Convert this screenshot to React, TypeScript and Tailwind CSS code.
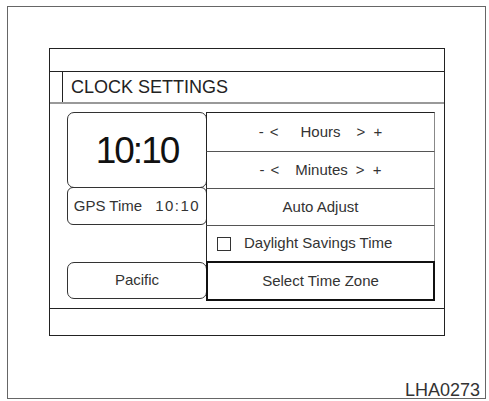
import React from 'react';

const font = { fontFamily: '"Liberation Sans", Arial, sans-serif' };

function Row({ children, className = '' }: { children: React.ReactNode; className?: string }) {
    return (
        <div className={`-mt-px flex items-center justify-center border border-[#555] border-r-[#888] text-[15px] text-[#333] ${className}`}>
            {children}
        </div>
    );
}

function Stepper({ label, gap }: { label: string; gap: string }) {
    return (
        <div className="flex items-center">
            <span className="w-[11px]">-</span>
            <span>&lt;</span>
            <span className={gap}>{label}</span>
            <span className="w-[17px]">&gt;</span>
            <span>+</span>
        </div>
    );
}

export default function App() {
    return (
        <div className="w-[489px] h-[401px] bg-white pt-[6px] pl-[7px]" style={font}>
            <div className="w-[479px] h-[393px] border border-[#666] flex flex-col">
                {/* nav screen */}
                <div className="mt-[41px] ml-[41px] w-[396px] border border-[#222]">
                    <div className="h-[23px] border-b border-[#222]"></div>
                    <div className="flex h-[32px] border-b-2 border-[#999]">
                        <div className="w-[13px] border-r border-[#222]"></div>
                        <div className="pl-[8px] text-[18px] leading-[30px] text-[#222]">CLOCK SETTINGS</div>
                    </div>

                    <div className="flex pt-[8px] pl-[17px] pb-[7px]">
                        {/* left column */}
                        <div className="w-[140px] flex flex-col">
                            <div className="h-[76px] rounded-[7px] border border-[#333] flex items-center justify-center">
                                <span className="text-[37px] leading-none tracking-[-2px] text-[#111]">10:10</span>
                            </div>
                            <div className="-mt-px h-[38px] rounded-[6px] border border-[#333] flex items-center justify-center gap-[13px] text-[15px] text-[#333]">
                                <span>GPS Time</span>
                                <span className="tracking-[1.5px]">10:10</span>
                            </div>
                            <div className="mt-[37px] h-[37px] rounded-[7px] border border-[#333] flex items-center justify-center text-[15px] text-[#333]">
                                Pacific
                            </div>
                        </div>

                        {/* right column */}
                        <div className="-ml-px w-[229px] flex flex-col">
                            <Row className="mt-0 h-[40px] border-t-[#222] border-l-[#222]">
                                <Stepper label="Hours" gap="pl-[22px] pr-[16px]" />
                            </Row>
                            <Row className="h-[38px] border-l-[#222]">
                                <Stepper label="Minutes" gap="pl-[16px] pr-[8px]" />
                            </Row>
                            <Row className="h-[38px] border-l-[#222]">Auto Adjust</Row>
                            <Row className="h-[37px] border-l-[#222] justify-start pl-[10px] gap-[13px]">
                                <span className="w-[14px] h-[14px] border-[1.5px] border-[#333]"></span>
                                <span>Daylight Savings Time</span>
                            </Row>
                            <div className="-mt-px h-[40px] border-2 border-[#111] flex items-center justify-center text-[15px] text-[#333]">
                                Select Time Zone
                            </div>
                        </div>
                    </div>

                    <div className="h-[27px] border-t border-[#222]"></div>
                </div>

                <div className="mt-auto self-end pr-[5px] text-[18px] leading-[16px] text-[#333]">LHA0273</div>
            </div>
        </div>
    );
}
